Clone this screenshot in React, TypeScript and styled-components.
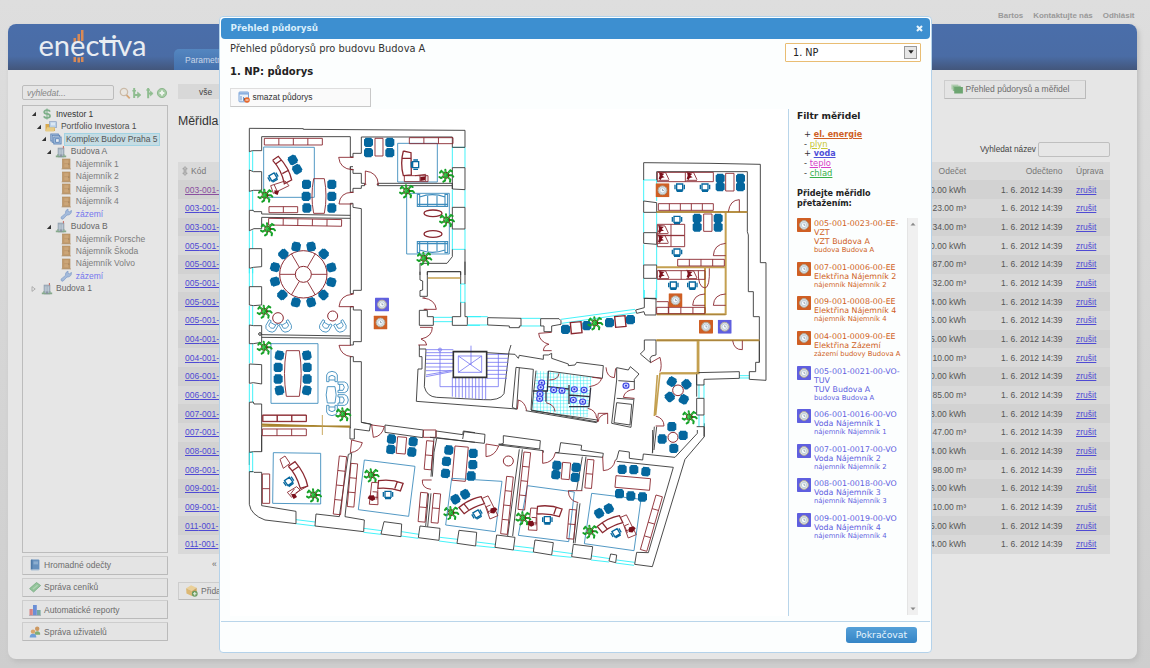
import React from 'react';
import styled, { createGlobalStyle } from 'styled-components';

const sans = '"Liberation Sans", Arial, sans-serif';
const wide = '"DejaVu Sans", Verdana, sans-serif';
const ORANGE = '#cf5f24';
const BLUE = '#5f5fdf';

const Global = createGlobalStyle`
  * { box-sizing: border-box; }
  body { margin: 0; background: linear-gradient(#dedede, #cecece); height: 668px; overflow: hidden; }
`;

/* ---------- page behind the dialog ---------- */
const Page = styled.div`
  height: 668px; padding: 0 13px 9px 8px; display: flex; flex-direction: column;
  font: 8.5px/12px ${sans}; color: #666;
`;
const TopLinks = styled.nav`
  height: 24px; flex: none; display: flex; justify-content: flex-end; gap: 10px;
  padding: 10px 2.5px 0 0; font-weight: bold; font-size: 7.95px; color: #999;
`;
const Card = styled.div`
  flex: 1; display: flex; flex-direction: column; border-radius: 8px; background: #e6e6e6;
  box-shadow: 2px 3px 5px #bdbdbd; overflow: hidden;
`;
const Header = styled.header`
  height: 46px; flex: none; display: flex; align-items: flex-end;
  background: linear-gradient(#4a6eaa 0%, #4a6ca5 70%, #43567b 100%);
`;
const LogoBox = styled.div`width: 166px; height: 46px; svg { display: block; }`;
const HeaderTab = styled.div`
  width: 120px; height: 21px; padding: 4.5px 0 0 11px; color: #c9d6e8; white-space: nowrap;
  border-radius: 5px 5px 0 0; background: linear-gradient(#5486c0, #4471ad);
`;
const Columns = styled.div`flex: 1; display: flex; padding-left: 14px;`;
const Sidebar = styled.aside`width: 146px; padding-top: 14.5px; flex: none;`;
const SearchRow = styled.div`
  display: flex; align-items: center; height: 16px; gap: 0.6px; margin-bottom: 4px;
`;
const SearchInput = styled.div`
  width: 92px; height: 15px; border: 1px solid #bcbcbc; border-radius: 2px; padding: 1px 4px;
  font-style: italic; color: #858585; margin-right: 4px; flex: none;
`;
const TreeBox = styled.div`
  height: 448px; border: 1px solid #bcbcbc; padding-top: 2.6px; margin-bottom: 3.6px;
`;
const TreeRow = styled.div<{ $depth: number }>`
  display: flex; align-items: center; height: 12.47px; padding-left: ${p => 7 + p.$depth * 4.95}px;
`;
const Arrow = styled.span<{ $closed?: boolean }>`
  width: 10.5px; display: flex; flex: none; svg { margin-left: 1px; }
`;
const TreeIcon = styled.span`width: 13px; display: flex; flex: none; margin-right: 1.5px;`;
const TreeLabel = styled.span<{ $tone?: string; $active?: boolean }>`
  color: ${p => p.$tone || '#7c7c7c'}; white-space: nowrap; line-height: 11px; padding: 0 1px;
  ${p => p.$active && 'background:#c5dce3;box-shadow:0 0 0 1px #a2d3e3;'}
`;
const PageButton = styled.div<{ $w?: number; $mb?: number }>`
  width: ${p => p.$w || 146}px; height: 18.5px; margin-bottom: ${p => p.$mb ?? 3.6}px;
  display: flex; align-items: center; gap: 3px; padding-left: 6px; white-space: nowrap;
  background: #e4e4e4; border: 1px solid #cdcdcd; border-right-color: #bababa; border-bottom-color: #bababa;
  border-radius: 1px; color: #6c6c6c;
`;
const Content = styled.main`width: 932px; margin-left: 10px; padding-top: 9px;`;
const Between = styled.div<{ $h: number }>`
  display: flex; justify-content: space-between; align-items: flex-start; height: ${p => p.$h}px;
`;
const Filter = styled.div`
  width: 80px; height: 15px; margin-top: 5px; background: #d8d8d8; padding: 1.5px 0 0 21px; color: #444;
`;
const Push = styled.div`padding-right: 24.5px; padding-top: 1px;`;
const PageTitle = styled.div`font-size: 12.3px; line-height: 16px; color: #333;`;
const FindRow = styled.label`
  display: flex; align-items: center; justify-content: flex-end; gap: 2px; height: 15px;
  font-size: 8.25px; color: #444; margin-bottom: 4.5px;
  i { width: 72px; height: 15px; border: 1px solid #bfbfbf; border-radius: 2px; }
`;
const Row = styled.div<{ $shade: string }>`
  display: grid; grid-template-columns: 700px 88px 96.5px 1fr; height: 18.68px; align-items: center;
  background: ${p => p.$shade}; color: #555; padding-left: 0;
  > :nth-child(2), > :nth-child(3) { text-align: right; }
  > :nth-child(4) { padding-left: 13.5px; }
  > :nth-child(1) { padding-left: 7px; }
`;
const HeadRow = styled(Row)`color: #777; > :nth-child(1) { display: flex; gap: 3px; padding-left: 4px; align-items: center; }`;
const Anchor = styled.a<{ $c?: string }>`color: ${p => p.$c || '#4f4ad4'}; text-decoration: underline;`;
const Pager = styled.div`height: 28px; padding: 4px 0 0 34px; color: #666;`;

/* ---------- dialog ---------- */
const Dialog = styled.section`
  position: fixed; left: 219px; top: 16px; width: 713px; height: 637px; display: flex; flex-direction: column;
  border: 1px solid #b4d2ea; border-radius: 4px; background: #fcfefe; padding: 0.5px 1px 0; font-family: ${wide};
  color: #333;
`;
const TitleBar = styled.h2`
  margin: 0; height: 21px; flex: none; display: flex; align-items: center; justify-content: space-between;
  padding: 0 7px 0 9.5px; border-radius: 4px; background: #3d8fd0; color: #d9eefb;
  font: bold 8.77px ${wide};
`;
const Intro = styled.div`height: 70.5px; flex: none; display: flex; justify-content: space-between; padding: 0 9px 0 9px;`;
const IntroText = styled.div`font-size: 9.86px; line-height: 12px; padding-top: 4px; white-space: nowrap;`;
const Heading = styled.h3`margin: 11px 0 10.5px; font: bold 10px/12px ${wide}; color: #222;`;
const DialogButton = styled.div`
  width: 141px; height: 18.5px; display: flex; align-items: center; gap: 3px; padding-left: 6.5px;
  border: 1px solid #dedede; border-right: 1.5px solid #c8c8c8; border-bottom: 1.5px solid #c8c8c8;
  background: #fafafa; font: 8.5px ${sans}; color: #333;
`;
const Select = styled.div`
  width: 136px; height: 18.5px; margin-top: 4.5px; border: 1.3px solid #e9bd73; border-radius: 1px; background: #fff;
  display: flex; align-items: center; justify-content: space-between; padding: 0 3px 0 7px; font-size: 9.7px; color: #222;
`;
const DropArrow = styled.span`
  width: 13px; height: 13px; border: 1px solid #999; background: #e6e6e6; display: flex; align-items: center; justify-content: center;
`;
const Work = styled.div`height: 506.5px; flex: none; display: flex; padding-left: 9px;`;
const PlanBox = styled.div`width: 558px; background: #fff; svg { display: block; }`;
const Side = styled.aside`border-left: 1px solid #b9d5ea; flex: 1; padding: 0 12px 0 8px; display: flex; flex-direction: column;`;
const SideTitle = styled.div`font: bold 9.1px/12px ${wide}; color: #222; margin-bottom: 8.5px; padding-top: 0.5px;`;
const FilterLine = styled.div`
  font-size: 8.4px; line-height: 9.7px; height: 9.7px; padding-left: 7px; white-space: pre;
`;
const FilterLink = styled.a<{ $c: string; $on?: boolean }>`
  color: ${p => p.$c}; text-decoration: underline; font-weight: ${p => (p.$on ? 'bold' : 'normal')};
  font-size: ${p => (p.$on ? 8 : 8.4)}px;
`;
const DragTitle = styled.div`font: bold 8.07px/9.6px ${wide}; color: #222; margin: 11px 0 9.5px; width: 90px;`;
const Scroller = styled.div`display: flex; height: 397px; justify-content: space-between;`;
const MeterList = styled.div`width: 109px;`;
const Meter = styled.div<{ $c: string }>`
  display: flex; gap: 3px; color: ${p => p.$c}; font-size: 7.9px; line-height: 9px; height: auto; padding-bottom: 6.6px; white-space: nowrap;
  svg { flex: none; }
  > div { padding-top: 1px; }
  small { font-size: 6.85px; display: block; line-height: 9px; }
`;
const Bar = styled.div`
  width: 11px; background: #f0f0f0; border-left: 1px solid #e4e4e4; display: flex; flex-direction: column;
  justify-content: space-between; align-items: center; padding: 4px 0;
`;
const Footer = styled.footer`
  margin: 5px 0 0; border-top: 1px solid #b9d5ea; flex: 1; display: flex; justify-content: flex-end; padding: 5.5px 13px 0 0;
`;
const Primary = styled.button`
  width: 71px; height: 15.5px; border: 0; border-radius: 3px; padding: 0; color: #e6f4fd;
  background: linear-gradient(#55a0d8, #3585c6); font: 9.27px/15px ${wide};
`;

/* ---------- small icons ---------- */
const Ico = ({ k, s = 12 }: { k: string; s?: number }) => (
  <svg width={s} height={s} viewBox="0 0 12 12">
    {k === 'dollar' && <g fill="none" stroke="#7fb08a" strokeWidth="1.8"><path d="M9 3.6Q8.5 2.2 6 2.2 3.2 2.2 3.2 4 3.2 5.6 6 5.9 9 6.2 9 8 9 9.8 6 9.8 3.4 9.8 3 8.2" /><path strokeWidth="1.1" d="M6 .4V11.6" /></g>}
    {k === 'folder' && <g><path d="M.5 3H4L5 4H10V10H.5Z" fill="#d9aa4e" /><rect x="4.5" y=".7" width="7" height="6" fill="#b9d0e6" stroke="#8298bd" strokeWidth=".6" /><path d="M6 2.2h4M6 3.8h4" stroke="#fff" strokeWidth=".7" /><path d="M.5 10.5L2 6.3H9.8L9 10.5Z" fill="#e8cc84" /></g>}
    {k === 'complex' && <g strokeWidth=".9" stroke="#5d83b5"><rect x=".8" y="1" width="7.5" height="7" fill="#bcd0e8" /><rect x="2.2" y="2.3" width="7.5" height="7" fill="#d2deea" /><rect x="3.8" y="4" width="7.3" height="7" fill="#a9c5e2" /><rect x="5.6" y="5.7" width="3.6" height="3.6" fill="#e9eef5" /></g>}
    {k === 'building' && <g><rect x="3" y="2" width="6" height="9" fill="#a5b3c0" stroke="#8492a2" strokeWidth=".5" /><path d="M4.3 3.5v5M5.9 3.5v5M7.5 3.5v5" stroke="#cdd7e0" strokeWidth=".6" /><path d="M8.4 0v2.3" stroke="#c86a60" /><path d="M.8 11.2H11.2V9.4H9.4V8H8.6V10H3.4V8H2.4V9.6H.8Z" fill="#86a98c" /><path d="M5.2 8.4h1.6v2.6H5.2z" fill="#8890a0" /></g>}
    {k === 'door' && <g><rect x="2.4" y="1" width="7.6" height="9.6" fill="#c29a6c" stroke="#b08a5c" strokeWidth=".6" /><path d="M4.3 2.3H8.2V5H4.3ZM4.3 6.2H8.2V9.3H4.3Z" fill="#cba679" /><path d="M1.6 10.9H11" stroke="#b39069" strokeWidth=".8" /><circle cx="8.8" cy="6" r=".5" fill="#765" /></g>}
    {k === 'wrench' && <path d="M1 9.2L5.5 5.4Q5 2.2 8 1L8 3.2 9.8 4 11.3 2.3Q12 6 8.2 7L7 7 3 11.2Q.8 11.5 1 9.2Z" fill="#a4bbdb" stroke="#7f9cc8" strokeWidth=".7" />}
    {k === 'search' && <g fill="none"><path d="M7.4 7.8L10.8 11.3" stroke="#d7a878" strokeWidth="1.8" /><circle cx="5" cy="5" r="3.7" fill="#e9e6e0" stroke="#cbbba9" strokeWidth="1.3" /></g>}
    {k === 'expand' && <g fill="none" stroke="#8fbd90" strokeWidth="2"><path d="M3.2 1V11M3.2 8H8" /><path d="M6.6 5L10 8 6.6 11Z" fill="#8fbd90" strokeWidth=".6" /><path d="M1.4 3.8H5" strokeWidth="1.4" /></g>}
    {k === 'collapse' && <g fill="none" stroke="#8fbd90" strokeWidth="2"><path d="M4.2 1V11.2M4.2 6.5H8" /><path d="M6.4 4L9.2 6.5 6.4 9Z" fill="#8fbd90" strokeWidth=".6" /><path d="M2.4 3H6" strokeWidth="1.4" /></g>}
    {k === 'plus' && <g><circle cx="6" cy="6" r="4.6" fill="#a6cba5" stroke="#8cb68c" /><path d="M6 3.6V8.4M3.6 6H8.4" stroke="#edf4ec" strokeWidth="2" /></g>}
    {k === 'book' && <g><rect x="1.7" y=".6" width="8.7" height="10.6" rx="1" fill="#6690bd" /><path d="M2.8.6v10.5" stroke="#456f9f" /><rect x="4.5" y="2.4" width="4.5" height="3" fill="#8badcf" /><path d="M2 10.8H10.3" stroke="#d5dde5" strokeWidth=".7" /></g>}
    {k === 'tag' && <g><path d="M.6 7.6L7.5 1.5 11.6 4.5 4.6 11Z" fill="#93c39a" stroke="#76ab80" strokeWidth=".8" /><path d="M4 8L8.6 4.2" stroke="#aed3b2" strokeWidth="1.3" /></g>}
    {k === 'chart' && <g><path d="M.5 5h3.3v6.2h-3.3z" fill="#d88484" /><path d="M4 1h3.8v10.2H4z" fill="#6b8fd6" /><path d="M8 6h3.6v5.2H8z" fill="#76a8a0" /><path d="M0 11.4H12" stroke="#8d8d9d" strokeWidth=".6" /></g>}
    {k === 'users' && <g><circle cx="8.2" cy="2.8" r="2.2" fill="#cd9860" /><path d="M5.6 8.8Q5.4 5.2 8.2 5.2 11.5 5.2 11.2 8.8Z" fill="#80ad75" /><circle cx="4" cy="5.6" r="2.2" fill="#d8a66c" /><path d="M.7 11.6Q.6 7.8 4 7.8 7.5 7.8 7.3 11.6Z" fill="#6f9fd8" /></g>}
    {k === 'box' && <g><path d="M1 4L5.6 1.2 10.8 3.5 6.4 6.4Z" fill="#ead099" /><path d="M1 4L6.4 6.4V11L1.4 8.8Z" fill="#dcb874" /><path d="M10.8 3.5V8.3L6.4 11V6.4Z" fill="#cfa55f" /><circle cx="9" cy="9" r="2.7" fill="#6d9c61" /><path d="M9 7.4v3.2M7.4 9h3.2" stroke="#e6f1e2" /></g>}
    {k === 'plans' && <g><path d="M.3 1.5h7v5H.3z" fill="#b5d0b5" /><path d="M1.8 2.7h8v5.4H1.8z" fill="#93bd95" /><path d="M3.2 4H11.9V10.4H3.2z" fill="#6da571" /></g>}
    {k === 'delplan' && <g><rect x="1" y="1" width="9.5" height="9.8" rx=".8" fill="#eaf2fa" stroke="#7ba3d8" /><path d="M1 2.5H10.5" stroke="#8bb0e0" strokeWidth="2.2" /><path d="M3 5v4.5M5.5 6v3.5H8" stroke="#6f97cc" /><circle cx="9" cy="9" r="2.8" fill="#e8682b" /><path d="M7.5 9h3" stroke="#fff" /></g>}
  </svg>
);

const Dial = ({ c, x = 0, y = 0 }: { c: string; x?: number; y?: number }) => (
  <svg x={x} y={y} width="14" height="14" viewBox="0 0 14 14">
    <rect width="14" height="14" rx=".8" fill={c} />
    <circle cx="7" cy="7" r="4.4" fill="#dfe3e6" stroke="#b0a999" strokeWidth="1" />
    <circle cx="7" cy="7" r="2.7" fill="#f7fafc" stroke="#9fb8c9" strokeWidth=".6" />
    <path d="M7 5.6V7.2H8.4" fill="none" stroke="#789" strokeWidth=".7" />
  </svg>
);

/* ---------- floor plan ---------- */
const Stroke = styled.path<{ $c?: string; $w?: number }>`
  fill: none; stroke: ${p => p.$c || '#383838'}; stroke-width: ${p => p.$w || 0.9}px; vector-effect: non-scaling-stroke;
`;
const CY = '#2ff0f8', MA = '#8a2830', OC = '#c4a050', RG = '#3f8dbd', ST = '#7474f2';
type P = [number, number, number?];

const Region = ({ x, y, children }: { x: number; y: number; children: React.ReactNode }) => (
  <g transform={`translate(${x} ${y}) scale(.33333)`}>{children}</g>
);
const Chairs = ({ at }: { at: P[] }) => (
  <>{at.map(([x, y, r = 0], i) => (
    <path key={i} transform={`translate(${x} ${y}) rotate(${r})`} fill="#05679e"
      d="M-9-14H9L11-10 14-9V9L10 11 9 14H-8L-11 11-13 9V-9L-10-10Z" />
  ))}</>
);
const OpenChairs = ({ at }: { at: P[] }) => (
  <>{at.map(([x, y, r = 0], i) => (
    <g key={i} transform={`translate(${x} ${y}) rotate(${r})`}>
      <Stroke $c="#05679e" $w={1.3} d="M-9-9H9V9H-9ZM-14-7V7M14-7V7M-9 13H9" />
    </g>
  ))}</>
);
const ArmChairs = ({ at }: { at: P[] }) => (
  <>{at.map(([x, y, r = 0], i) => (
    <g key={i} transform={`translate(${x} ${y}) rotate(${r})`}>
      <Stroke $c={RG} d="M-16 15V-5Q-14-15 0-16 14-15 16-5V15H9V0Q0-8-9 0V15ZM-9 10H9" />
    </g>
  ))}</>
);
const Plants = ({ at }: { at: P[] }) => (
  <>{at.map(([x, y], i) => (
    <g key={i} transform={`translate(${x} ${y})`} fill="none" strokeLinecap="round">
      <path stroke="#14a026" strokeWidth="6" d="M0 0L-14-13-18-8M0 0L-2-17M0 0L13-15 18-12M0 0L18 0 22 4M0 0L13 13 12 19M0 0L-3 16-8 19M0 0L-15 8-20 5" />
      <circle r="9" stroke="#702018" strokeWidth="2.6" />
      <path stroke="#4ad458" strokeWidth="2" d="M-12-11L11 11M-11 7L11-12M-2-14L-3 13" />
    </g>
  ))}</>
);
type B = [number, number, number, number, number, number?];
/* Box rows: x, y, width, height, number of cells, rotation about the top-left corner. */
const Cabinets = ({ at }: { at: B[] }) => (
  <>{at.map(([x, y, w, h, n, r = 0], i) => {
    let d = `M0 0H${w}V${h}H0Z`;
    for (let k = 1; k < n; k++) d += w > h ? `M${(w * k) / n} 0V${h}` : `M0 ${(h * k) / n}H${w}`;
    return <g key={i} transform={`translate(${x} ${y}) rotate(${r})`}><Stroke $c={MA} d={d} /></g>;
  })}</>
);
const Desk = ({ x, y, r = 0, f = 1 }: { x: number; y: number; r?: number; f?: number }) => (
  <g transform={`translate(${x} ${y}) rotate(${r}) scale(${f} 1)`}>
    <Stroke $c={MA} $w={1.3} d="M-36-12Q0-20 38-8L31 15Q0 6-37 11ZM20-12L14 9" />
    <Stroke $c={MA} d="M-38-6H-56L-60 60H-34L-37 14M-58 38H-35M-52 22H-38V45" />
    <path d="M-62 34L-48 32-42 44-52 50-66 42Z" fill="#7c101c" />
  </g>
);
const Rounds = ({ at }: { at: P[] }) => (
  <>{at.map(([x, y, r = 15], i) => <circle key={i} cx={x} cy={y} r={r} fill="none" stroke={MA} strokeWidth="3" />)}</>
);
const Blobs = ({ at }: { at: P[] }) => (
  <>{at.map(([x, y], i) => (
    <g key={i} transform={`translate(${x} ${y})`}>
      <path d="M-8-12L8-8 2-2 9 3 0 5-3 11-9 7-6-2Z" fill="#7c101c" />
      <Stroke $c={MA} d="M-10-13L12-11 22 10M-10 12H22" />
    </g>
  ))}</>
);

const FloorPlan = () => (
  <svg width="558" height="506" viewBox="230 109 558 506">
    <defs>
      <pattern id="tiles" width="10" height="10" patternUnits="userSpaceOnUse">
        <path d="M0 0H10M0 0V10" stroke="#35ecf2" strokeWidth="3" />
      </pattern>
    </defs>

    <Region x={235} y={115}>
      <Stroke $c={CY} d="M43 110V165M53 108V168M43 228V286M53 228V287M43 347V401M53 346V401M43 460V475M53 458V475M652 97V158M690 97V158M652 224V277M690 224V277M652 342V403M690 342V403M652 97H690M652 403H690" />
      <Stroke $c={RG} d="M86 96L238 97V247H86ZM488 85H607V201H488ZM515 235H643V417H515Z" />
      <Stroke d="M43 110V40L205 41V43L690 46V97H652V66H379V115H354V126H346V65H80V107H52L43 110M43 165L55 170H80V226H55L43 229ZM43 286L55 286 57 290H80V297L346 301M80 307L346 310M43 286V347L57 341H80V307M43 401H80V455L55 457 43 460ZM652 158H690V224L652 222ZM652 277H690V342H652ZM346 155V163H354V175H379V205H389V212H379V220H354V232H346V155M428 205H652V212H428ZM346 265V480M346 265H354V277L379 281V480M652 403V425L636 445H555V480M577 480V470H677V480M690 403V480M346 155H354M652 212V222" />
      <Cabinets at={[[88, 70, 174, 20, 4], [102, 275, 86, 18, 2], [101, 310, 219, 20, 5, 1], [523, 68, 131, 18, 3], [420, 70, 24, 53, 1]]} />
      <Stroke $c={MA} d="M236 191H268Q278 243 268 295H236Q226 243 236 191M353 127H311Q315 162 352 164M391 207V168Q428 172 430 208M352 267H312Q315 232 352 232M347 127H356M347 164H356M347 232H356M387 208H394M425 208H432" />
      <Stroke $c={MA} $w={1.3} d="M113 136L130 124Q163 160 170 195L148 206Q140 165 113 136M122 147L139 135M142 176L162 165M505 108L528 113 529 180 505 182Q495 145 505 108M502 130H528" />
      <Stroke $c={MA} d="M107 212L150 198 162 212 115 235ZM118 210L126 228M508 182H579V200H508ZM540 182L572 178V198M555 180V198" />
      <path d="M118 226L132 228 128 240 119 236ZM556 186L572 184 570 196 556 198Z" fill="#7c101c" />
      <Chairs at={[[173, 135, -30], [186, 163, -30], [214, 208], [213, 244], [215, 279], [290, 208], [290, 244], [290, 279], [400, 82], [464, 82], [400, 113], [464, 113]]} />
      <OpenChairs at={[[114, 186, -30], [542, 149, 90]]} />
      <Stroke $c={RG} $w={1.1} d="M547 274V238H554V246Q592 232 630 246V238H638V274ZM554 246V272M578 243V272M606 243V272M630 246V272M547 268H638M547 380V413H554V405Q592 419 630 405V413H638V380ZM554 405V382M578 408V382M606 408V382M630 405V382M547 386H638" />
      <ellipse cx="594" cy="295" rx="27" ry="10" fill="none" stroke="#8a2830" strokeWidth="4" />
      <ellipse cx="594" cy="357" rx="27" ry="10" fill="none" stroke="#8a2830" strokeWidth="4" />
      <Plants at={[[90, 241], [633, 181], [515, 228], [635, 315], [567, 430], [98, 342]]} />
    </Region>

    <Region x={235} y={265}>
      <Stroke $c={CY} d="M43 10V65M53 10V65M43 122V180M53 122V180M43 236V295M53 236V295M43 357V412M53 357V412M677 57V112M690 57V112M677 57H690M677 112H690M595 157H652M595 170H652M697 155H738M697 181H735" />
      <Stroke $c={RG} d="M108 236H249V415H108Z" />
      <Stroke d="M43 65H80V120L55 122 43 120ZM43 180L55 182H80V232L55 236 43 236ZM43 297L80 299V357L55 353 43 355ZM43 600V412L55 411 57 417H80V560M80 209L345 213M80 217L345 220M346 30V86H355V76H379V30M346 125V240H355V230H379V135H355V125ZM346 275V490M346 275H355V290H379V472L412 479M555 20L555 45 563 48V75L555 77V94H577V20H677V57M690 -10V57M677 112V155H652V181H697V155H690V112M553 136H577V155H595V181H553V136M553 240V252H573L568 365Q575 395 605 397L745 404Q795 408 807 386L822 260 828 240M553 252V275H561V312H549L544 409 845 432 853 308" />
      <circle cx="75" cy="207" r="4" fill="none" stroke="#333" strokeWidth="3" />
      <Stroke $c={OC} $w={1.5} d="M579 39H676" />
      <Stroke $c={ST} $w={.8} d="M573 254H655M573 263H655M573 272H655M573 283H655M573 295H655M573 306H655M573 317H655M573 330L648 317M573 335L650 320M615 250V365H790V265M708 242V300M755 268H820M755 280H820M755 292H820M755 304H818M755 316H818M755 328H816M755 340H816M652 337V395M662 337V397M672 337V398M682 337V398M692 337V400M702 337V400M712 337V400M722 337V402M732 337V402M742 337V403M752 337V403M670 273H740V322H670ZM670 273L740 322M740 273L670 322" />
      <Stroke $c="#333" $w={1.6} d="M655 260H755V337H655Z" />
      <circle cx="615" cy="254" r="5" fill="none" stroke={ST} strokeWidth="2" />
      <Stroke $c={MA} d="M352 125H312Q316 90 352 88M348 87H356M348 125H356M568 133H604Q600 103 565 99M562 99H571M566 133H575M555 187H592Q592 215 558 222Q575 228 575 240H550M348 241H312Q318 272 350 275M154 257H193Q204 325 193 394H154Q143 325 154 257M229 28H276M181 28H134M217 49L241 90M193 49L169 90M217 7L241 -34M193 7L169 -34" />
      <Rounds at={[[205, 28, 71], [205, 28, 24], [129, 159, 16], [293, 153, 15]]} />
      <Chairs at={[[120, 7, -75], [120, 50, -105], [142, 90, -135], [182, 112, 15], [228, 112, -15], [265, 90, -45], [289, 52, -75], [289, 7, 75], [145, -33, 45], [183, -55, 10], [228, -55, -10], [266, -33, -45], [133, 271, 10], [129, 307], [129, 342], [133, 376, -10], [215, 271, -10], [216, 307], [216, 342], [215, 376, 10]]} />
      <ArmChairs at={[[109, 185, 210], [153, 185, 150], [270, 185, 210], [317, 185, 150], [291, 335], [324, 367, 90], [324, 405, 90], [291, 436, 180]]} />
      <Stroke $c={RG} d="M277 365H300Q307 390 300 414H277Q270 390 277 365" />
      <Cabinets at={[[84, 451, 130, 18, 3]]} />
      <Plants at={[[88, 139], [88, 247], [324, 447]]} />
    </Region>

    <Region x={235} y={415}>
      <Stroke $c={CY} d="M43 112V170M53 112V170M43 112H53M43 170H53M183 314L240 321M183 326L240 333M386 340L440 347M386 352L438 358M500 350L552 358M498 363L550 370M615 367L668 373M612 378L666 385" />
      <Stroke $c={RG} d="M115 113L257 115V267L113 265ZM388 135L540 154 521 304 370 284Z" />
      <Stroke d="M43 112L55 110H80V60M43 170H55L57 172H80V272L183 289V326L90 315Q48 300 43 268ZM240 333L243 297 313 305 340 118 350 115 330 305 388 315 386 350ZM379 22L407 27 403 48 358 42V72H345V36M450 30L565 45 563 68 450 52ZM603 68V48L683 59 685 48 720 53M605 68L720 82M605 70L597 112 592 185M597 70L588 185M588 235L578 335M581 235L572 333M447 320L500 327 498 365 438 357ZM555 333L615 340 612 376 550 368ZM672 346L725 352 722 393 666 385Z" />
      <Stroke $c="#a8832c" $w={1.5} d="M80 28L345 36M80 33L345 34" /><Stroke $c={OC} d="M262 0V60" />
      <Cabinets at={[[82, 0, 132, 20, 3], [82, 42, 132, 20, 3], [82, 177, 22, 88, 2], [313, 123, 22, 175, 4, 6], [348, 145, 20, 130, 3, 5], [488, 65, 27, 50, 1, 5], [575, 77, 21, 86, 2, 5], [557, 232, 21, 88, 2, 5], [596, 235, 21, 88, 2, 5], [660, 93, 40, 103, 1, 5], [565, 45, 38, 22, 1]]} />
      <Stroke $c={MA} d="M410 30L415 67Q440 65 448 35ZM350 75L382 83Q375 110 346 113ZM590 195H562Q560 220 588 223M135 133L150 123 165 145 145 160Z" />
      <Stroke $c={MA} $w={1.3} d="M160 154L180 140Q210 175 218 213L196 220Q184 178 160 154M171 168L190 155" />
      <Stroke $c={MA} d="M157 232L185 215 195 225 170 247ZM182 234L218 213M166 238L178 222" />
      <path d="M168 238L180 236 186 246 176 252Z" fill="#7c101c" />
      <Desk x={466} y={211} r={3} />
      <Chairs at={[[469, 72, 5], [467, 103, 5], [534, 80, 5], [530, 111, 5], [641, 105, 5], [634, 139, 5], [631, 175, 5], [661, 253, -30], [690, 238, -30]]} />
      <OpenChairs at={[[161, 199, -35], [459, 238]]} />
      <Plants at={[[236, 240], [409, 180], [648, 293]]} />
    </Region>

    <Region x={460} y={430}>
      <Stroke $c={CY} d="M50 336L107 343M48 347L105 353M163 348L222 355M160 360L220 367M279 363L338 371M275 376L335 382M396 378L450 386M393 390L447 396M470 390L524 397M467 399L522 406" />
      <Stroke $c={RG} d="M-25 145L126 154 106 305 -43 285ZM202 167L343 186 326 335 175 316ZM395 190L543 208 522 362 373 341Z" />
      <Stroke d="M8 27L12 5 75 13 73 40 -90 22M116 45L130 40V17L241 32 239 57 116 42M116 45L250 62V68M178 58L143 318M187 58L158 318M110 315L165 322 160 360 105 352ZM225 330L280 338 275 375 220 366ZM340 343L398 350 393 388 335 380ZM452 372L470 375 467 398 447 393ZM286 68L297 68 302 38 365 46 363 60 430 70 428 82ZM367 80L350 180M378 80L365 182M360 220L345 340M352 220L340 340M466 90L470 88 477 62 508 66V85L548 90 550 72 645 82 712 10V0M470 94L640 112 565 368 530 367 524 403 577 410 675 88 733 20V-20M578 0V68" />
      <Cabinets at={[[140, 139, 20, 173, 4, 6], [192, 66, 20, 173, 4, 6], [308, 97, 24, 50, 1, 5], [328, 238, 21, 88, 2, 5], [382, 88, 20, 86, 2, 5], [588, 195, 20, 170, 4, 16], [468, 137, 104, 35, 1, 5]]} />
      <Stroke $c={MA} d="M78 42V80Q105 78 116 48ZM248 62V100Q280 98 286 68M367 182H325Q325 212 355 218M428 80L430 122Q460 120 466 90" />
      <Rounds at={[[145, 93], [639, 22]]} />
      <Desk x={35} y={225} r={-23} f={-1} /><Desk x={268} y={243} r={3} /><Desk x={450} y={282} r={-23} f={-1} />
      <Chairs at={[[39, 70], [38, 104], [33, 138], [290, 106, 5], [287, 134, 5], [348, 112, 5], [345, 142, 5], [486, 118], [521, 119], [557, 125, 5], [478, 191], [512, 198], [547, 201], [417, 250, -30], [446, 236, -30], [606, 27], [669, 16], [641, 55]]} />
      <OpenChairs at={[[51, 252, -30], [262, 269], [468, 308, -30]]} />
      <Plants at={[[189, 264], [390, 304]]} />
    </Region>

    <Region x={460} y={290}>
      <path d="M228 242L265 245 395 262 383 382 215 362Z" fill="url(#tiles)" />
      <Stroke $c={CY} d="M22 80H83M22 105H83M183 85H242M183 108H242M303 88L525 58M305 100L527 68M553 0V25M588 0V25" />
      <Stroke d="M83 83L183 85V108H178V113H148V108L83 105ZM242 86H297L303 92V103L275 108V125H252V108H242ZM527 60L553 53V25H588V75H555L552 65 530 70ZM553 150H588V195L575 198 570 206 572 218 541 192 553 180ZM80 188L165 193 175 205 178 196 250 208V195H265L275 190V205L325 222V227L345 225 350 217 430 227 427 265 265 243M220 238L168 232 157 352 170 358M220 238L213 360 412 396V390L215 362M228 242L215 362M197 362L410 398M511 230L537 252 523 268V298M511 230L505 240 470 233V270L455 400 513 412 522 325M470 325L520 328M475 272L523 275M470 338L515 343 510 405 462 398ZM583 410L577 490M590 410L582 480M710 320V285M720 248H710V285" />
      <Stroke $w={1.3} $c="#334" d="M265 243L262 303H218M265 290L325 297M327 285V342M327 315L390 320M392 293L387 350H327M258 305V335" />
      <Stroke $c={OC} $w={1.6} d="M588 151H716V250H602M600 248L587 375M592 255L583 378" />
      <Stroke $c={MA} d="M275 127L236 130Q238 155 267 163Q252 165 250 182H275M172 358L175 330Q195 335 200 362M438 232Q440 262 463 263L467 235M388 290Q420 285 425 265L397 262M412 395L415 370H443V402M415 395Q415 375 443 370M383 355Q408 360 410 385M490 322Q495 300 523 298M490 322L523 325M572 218L600 202Q607 230 600 245M587 408H612Q612 385 587 378M268 270Q295 270 297 250M258 338Q285 345 285 365" />
      {[[245, 278], [242, 292], [240, 312], [239, 326], [281, 300], [306, 302], [343, 298], [372, 300], [340, 330], [368, 335], [498, 287]].map(([x, y]) => (
        <g key={`${x}-${y}`}><ellipse cx={x} cy={y} rx="9" ry="8" fill="#c9d2ff" stroke="#3a42e2" strokeWidth="3.2" /><circle cx={x} cy={y} r="3" fill="#2d35db" /></g>
      ))}
      <Stroke $c={MA} $w={1.4} d="M331 98L363 95 366 128 334 131ZM464 80L495 77 498 109 467 112Z" />
      <Rounds at={[[654, 301, 16]]} />
      <Chairs at={[[316, 118], [380, 107], [448, 98], [511, 89], [635, 275, 30], [679, 283, -40], [629, 321, -40], [671, 328, 30], [635, 410]]} />
      <Plants at={[[405, 99], [688, 381]]} />
    </Region>

    <Region x={630} y={150}>
      <Stroke $c={CY} d="M41 90V153M80 90V153M41 90H80M41 187V248M80 187V248M41 283V345M80 283V345M41 385V445M80 385V445M328 677H358M328 684H358M207 703V745M222 703V745M207 795V830M222 795V830" />
      <Stroke d="M41 90V38L240 40 391 43V338H408V691L358 688V665H377V637H388V500H370V425H355V255L352 245V65H80V90M41 153L80 158V187H41ZM41 248H80V283L41 280ZM41 345H80V385H41ZM41 445H50L80 447M328 665L200 668V705H222V688L328 685ZM388 572V637M200 745H222V795H200ZM200 830H222V860" />
      <Stroke $c={OC} $w={2} d="M80 186H352M287 187V495M80 352H287M225 352V490M80 493H287M80 571H388M203 571V668M92 670H203" />
      <Stroke $c="#9c7430" $w={.7} d="M80 494H287M80 571H388M80 186H352" />
      <Cabinets at={[[82, 67, 168, 28, 2], [287, 70, 25, 53, 1], [85, 161, 165, 20, 5], [221, 192, 25, 52, 1], [82, 223, 82, 33, 2], [82, 257, 82, 33, 2], [143, 328, 140, 20, 4], [82, 362, 143, 26, 2], [80, 472, 145, 19, 4]]} />
      <Stroke $c={MA} d="M80 455H115V490M295 185Q300 150 328 149V185M287 317H250Q252 283 287 280M287 466H250Q252 433 287 432M225 466H188Q190 433 225 432M205 362Q203 412 225 414Q240 412 238 355M308 572Q312 600 337 599V572" />
      <Blobs at={[[95, 79], [179, 79], [93, 239], [93, 268], [95, 374], [179, 374]]} />
      <Chairs at={[[270, 85], [270, 110], [331, 85], [331, 110], [201, 205], [201, 231], [264, 205], [264, 231]]} />
      <OpenChairs at={[[149, 111], [225, 111], [141, 208], [141, 306], [130, 405], [187, 405]]} />
    </Region>

    <Dial c={BLUE} x={375} y={297.5} /><Dial c={ORANGE} x={373.5} y={315.5} />
    <Dial c={ORANGE} x={655.5} y={183.3} /><Dial c={ORANGE} x={668.5} y={293.3} />
    <Dial c={ORANGE} x={699} y={319.7} /><Dial c={BLUE} x={717.7} y={319.7} />
  </svg>
);

/* ---------- data ---------- */
type Node = { d: number; i: string; t: string; open?: boolean; shut?: boolean; on?: boolean; c?: string };
const tree: Node[] = [
  { d: 0, i: 'dollar', t: 'Investor 1', open: true, c: '#333' },
  { d: 1, i: 'folder', t: 'Portfolio Investora 1', open: true, c: '#4c4c4c' },
  { d: 2, i: 'complex', t: 'Komplex Budov Praha 5', open: true, on: true, c: '#555' },
  { d: 3, i: 'building', t: 'Budova A', open: true, c: '#666' },
  ...['Nájemník 1', 'Nájemník 2', 'Nájemník 3', 'Nájemník 4'].map(t => ({ d: 4, i: 'door', t })),
  { d: 4, i: 'wrench', t: 'zázemí', c: '#7476ee' },
  { d: 3, i: 'building', t: 'Budova B', open: true, c: '#666' },
  ...['Nájemník Porsche', 'Nájemník Škoda', 'Nájemník Volvo'].map(t => ({ d: 4, i: 'door', t })),
  { d: 4, i: 'wrench', t: 'zázemí', c: '#7476ee' },
  { d: 0, i: 'building', t: 'Budova 1', shut: true, c: '#666' },
];
const rows: [string, string][] = [
  ['003', '0.00 kWh'], ['003', '23.00 m³'], ['003', '34.00 m³'], ['005', '0.00 kWh'], ['005', '87.00 m³'],
  ['005', '32.00 m³'], ['005', '4.00 kWh'], ['005', '6.00 kWh'], ['004', '5.00 kWh'], ['004', '10.00 m³'],
  ['006', '0.00 kWh'], ['006', '85.00 m³'], ['007', '3.00 kWh'], ['007', '47.00 m³'], ['008', '4.00 kWh'],
  ['008', '98.00 m³'], ['009', '6.00 kWh'], ['009', '10.00 m³'], ['011', '5.00 kWh'], ['011', '4.00 kWh'],
];
const meters: [string, string[], string][] = [
  [ORANGE, ['005-001-0023-00-EE-', 'VZT', 'VZT Budova A'], 'budova Budova A'],
  [ORANGE, ['007-001-0006-00-EE', 'Elektřina Nájemník 2'], 'nájemník Nájemník 2'],
  [ORANGE, ['009-001-0008-00-EE', 'Elektřina Nájemník 4'], 'nájemník Nájemník 4'],
  [ORANGE, ['004-001-0009-00-EE', 'Elektřina Zázemí'], 'zázemí budovy Budova A'],
  [BLUE, ['005-001-0021-00-VO-', 'TUV', 'TUV Budova A'], 'budova Budova A'],
  [BLUE, ['006-001-0016-00-VO', 'Voda Nájemník 1'], 'nájemník Nájemník 1'],
  [BLUE, ['007-001-0017-00-VO', 'Voda Nájemník 2'], 'nájemník Nájemník 2'],
  [BLUE, ['008-001-0018-00-VO', 'Voda Nájemník 3'], 'nájemník Nájemník 3'],
  [BLUE, ['009-001-0019-00-VO', 'Voda Nájemník 4'], 'nájemník Nájemník 4'],
];
const filters: [string, string, string, boolean][] = [
  ['+', 'el. energie', '#cf5f24', true], ['-', 'plyn', '#c6c630', false], ['+', 'voda', '#4f4fd8', true],
  ['-', 'teplo', '#d63fc8', false], ['-', 'chlad', '#35b04a', false],
];

export default function App() {
  return (
    <>
      <Global />
      <Page>
        <TopLinks><span>Bartos</span><span>Kontaktujte nás</span><span>Odhlásit</span></TopLinks>
        <Card>
          <Header>
            <LogoBox>
              <svg width="166" height="46" viewBox="0 0 166 46">
                <g fill="#d98a55"><path d="M65.5 14h2.5v5H65.5zM69.5 10h2.5v8H69.5zM73 6h2.5v11H73zM65.5 33h2.5v5H65.5zM69.5 33.5h2.5v5H69.5zM73 33h2.5v5H73z" /></g>
                <text x="30.5" y="32" fontFamily="Lato, sans-serif" fontWeight="400" fontSize="29" fill="#e9edf2" textLength="108" lengthAdjust="spacingAndGlyphs">enectiva</text>
                <path d="M91 17H112" stroke="#e9edf2" strokeWidth="2" />
              </svg>
            </LogoBox>
            <HeaderTab>Parametr</HeaderTab>
          </Header>
          <Columns>
            <Sidebar>
              <SearchRow>
                <SearchInput>vyhledat...</SearchInput>
                <Ico k="search" /><Ico k="expand" /><Ico k="collapse" /><Ico k="plus" />
              </SearchRow>
              <TreeBox>
                {tree.map((n, i) => (
                  <TreeRow key={i} $depth={n.d}>
                    <Arrow>
                      {n.open && <svg width="6" height="6"><path d="M5 .8V5H.8Z" fill="#333" /></svg>}
                      {n.shut && <svg width="6" height="6"><path d="M1 .6L4.2 3 1 5.4Z" fill="none" stroke="#999" strokeWidth=".7" /></svg>}
                    </Arrow>
                    <TreeIcon><Ico k={n.i} /></TreeIcon>
                    <TreeLabel $tone={n.c} $active={n.on}>{n.t}</TreeLabel>
                  </TreeRow>
                ))}
              </TreeBox>
              <PageButton><Ico k="book" />Hromadné odečty</PageButton>
              <PageButton><Ico k="tag" />Správa ceníků</PageButton>
              <PageButton><Ico k="chart" />Automatické reporty</PageButton>
              <PageButton><Ico k="users" />Správa uživatelů</PageButton>
            </Sidebar>
            <Content>
              <Between $h={34}>
                <Filter>vše</Filter>
                <Push><PageButton $w={142} $mb={0}><Ico k="plans" />Přehled půdorysů a měřidel</PageButton></Push>
              </Between>
              <PageTitle>Měřidla</PageTitle>
              <Between $h={13}><span /></Between>
              <FindRow>Vyhledat název<i /></FindRow>
              <HeadRow $shade="#dadada">
                <span><svg width="6" height="10"><path d="M3 .5L5.3 3H4V7H5.3L3 9.5.7 7H2V3H.7Z" fill="#bbb" stroke="#888" strokeWidth=".5" /></svg>Kód</span>
                <span>Odečet</span><span>Odečteno</span><span>Úprava</span>
              </HeadRow>
              {rows.map(([code, v], i) => (
                <Row key={i} $shade={i % 2 ? '#d9d9d9' : '#d2d2d2'}>
                  <span><Anchor $c={i ? undefined : '#8a4f9f'}>{code}-001-</Anchor></span>
                  <span>{v}</span><span>1. 6. 2012 14:39</span><span><Anchor>zrušit</Anchor></span>
                </Row>
              ))}
              <Pager>«</Pager>
              <PageButton $w={120}><Ico k="box" s={13} />Přida</PageButton>
            </Content>
          </Columns>
        </Card>
      </Page>

      <Dialog>
        <TitleBar>Přehled půdorysů
          <svg width="7" height="7"><path d="M1 1L6 6M6 1L1 6" stroke="#e6f4fc" strokeWidth="2.1" /></svg>
        </TitleBar>
        <Intro>
          <div>
            <IntroText>Přehled půdorysů pro budovu Budova A</IntroText>
            <Heading>1. NP: půdorys</Heading>
            <DialogButton><Ico k="delplan" s={12} />smazat půdorys</DialogButton>
          </div>
          <Select>1. NP<DropArrow><svg width="6" height="4"><path d="M.3 .3H5.7L3 3.7Z" fill="#222" /></svg></DropArrow></Select>
        </Intro>
        <Work>
          <PlanBox><FloorPlan /></PlanBox>
          <Side>
            <SideTitle>Filtr měřidel</SideTitle>
            {filters.map(([s, t, c, on]) => (
              <FilterLine key={t}>{s} <FilterLink $c={c} $on={on}>{t}</FilterLink></FilterLine>
            ))}
            <DragTitle>Přidejte měřidlo přetažením:</DragTitle>
            <Scroller>
              <MeterList>
                {meters.map(([c, lines, sub]) => (
                  <Meter key={lines[0]} $c={c}>
                    <Dial c={c} />
                    <div>{lines.map(l => <div key={l}>{l}</div>)}<small>{sub}</small></div>
                  </Meter>
                ))}
              </MeterList>
              <Bar>
                <svg width="6" height="4"><path d="M.5 3.5H5.5L3 .8Z" fill="#888" /></svg>
                <svg width="6" height="4"><path d="M.5 .5H5.5L3 3.2Z" fill="#888" /></svg>
              </Bar>
            </Scroller>
          </Side>
        </Work>
        <Footer><Primary>Pokračovat</Primary></Footer>
      </Dialog>
    </>
  );
}
